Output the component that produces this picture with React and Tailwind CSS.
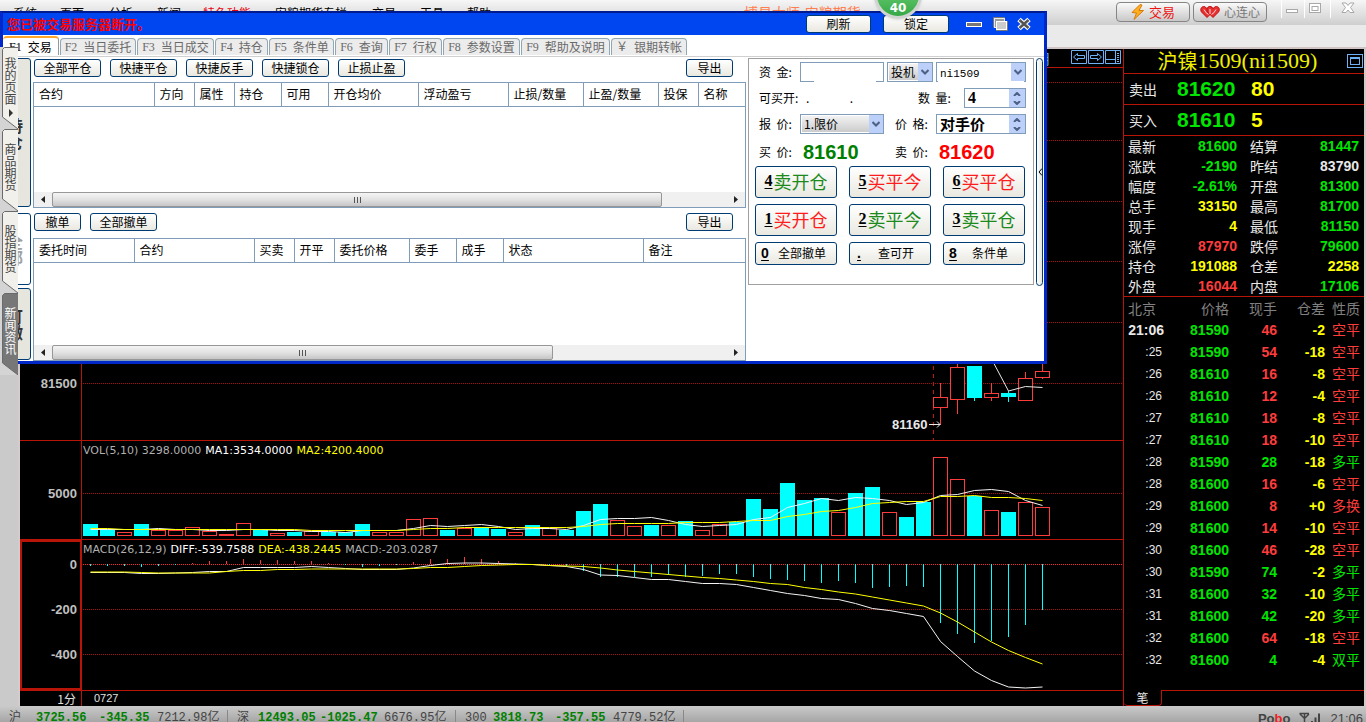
import React from "react";
import { FaBolt, FaHeart } from "react-icons/fa";

const RED = "#ff3c3c";
const CYAN = "#00ffff";

const menuItems = [
  { label: "系统", cls: "w-[47px]" },
  { label: "页面", cls: "w-[49px]" },
  { label: "分析", cls: "w-12" },
  { label: "新闻", cls: "w-[46px]" },
  { label: "特色功能", cls: "w-[72px] text-red-600" },
  { label: "安粮期货专栏", cls: "w-[97px]" },
  { label: "交易", cls: "w-12" },
  { label: "工具", cls: "w-[47px]" },
  { label: "帮助", cls: "w-12" },
];

const windowTabs = [
  { k: "F2", label: "当日委托", cls: "w-[76px]" },
  { k: "F3", label: "当日成交", cls: "w-[77px]" },
  { k: "F4", label: "持仓", cls: "w-[53px]" },
  { k: "F5", label: "条件单", cls: "w-[65px]" },
  { k: "F6", label: "查询", cls: "w-[53px]" },
  { k: "F7", label: "行权", cls: "w-[53px]" },
  { k: "F8", label: "参数设置", cls: "w-[77px]" },
  { k: "F9", label: "帮助及说明", cls: "w-[89px]" },
  { k: "￥", label: "银期转帐", cls: "w-[76px]" },
];

const positionCols = [
  ["合约", "w-[120px]"],
  ["方向", "w-[40px]"],
  ["属性", "w-[40px]"],
  ["持仓", "w-[47px]"],
  ["可用", "w-[47px]"],
  ["开仓均价", "w-[90px]"],
  ["浮动盈亏", "w-[90px]"],
  ["止损/数量", "w-[75px]"],
  ["止盈/数量", "w-[75px]"],
  ["投保", "w-[40px]"],
  ["名称", ""],
];

const orderCols = [
  ["委托时间", "w-[100px]"],
  ["合约", "w-[120px]"],
  ["买卖", "w-[40px]"],
  ["开平", "w-[40px]"],
  ["委托价格", "w-[75px]"],
  ["委手", "w-[47px]"],
  ["成手", "w-[47px]"],
  ["状态", "w-[140px]"],
  ["备注", ""],
];

const G = "text-[#00e600]";
const R = "text-[#ff3c3c]";
const Y = "text-[#ffff00]";
const W = "text-[#e8e8e8]";

const quotes = [
  ["最新", "81600", G, "结算", "81447", G],
  ["涨跌", "-2190", G, "昨结", "83790", W],
  ["幅度", "-2.61%", G, "开盘", "81300", G],
  ["总手", "33150", Y, "最高", "81700", G],
  ["现手", "4", Y, "最低", "81150", G],
  ["涨停", "87970", R, "跌停", "79600", G],
  ["持仓", "191088", Y, "仓差", "2258", Y],
  ["外盘", "16044", R, "内盘", "17106", G],
];

const ticks = [
  ["21:06", "81590", "46", "-2", "空平", R],
  [":25", "81590", "54", "-18", "空平", R],
  [":26", "81610", "16", "-8", "空平", R],
  [":26", "81610", "12", "-4", "空平", R],
  [":27", "81610", "18", "-8", "空平", R],
  [":27", "81610", "18", "-10", "空平", R],
  [":28", "81590", "28", "-18", "多平", G],
  [":28", "81600", "16", "-6", "空平", R],
  [":29", "81600", "8", "+0", "多换", R],
  [":29", "81600", "14", "-10", "空平", R],
  [":30", "81600", "46", "-28", "空平", R],
  [":30", "81590", "74", "-2", "多平", G],
  [":31", "81600", "32", "-10", "多平", G],
  [":31", "81600", "42", "-20", "多平", G],
  [":32", "81600", "64", "-18", "空平", R],
  [":32", "81600", "4", "-4", "双平", G],
];

/* Volume bars: "c" falling (solid), "r" rising (outline), with the bar height. */
const volume = [
  "c12", "c7", "r4", "c12", "r6", "r6", "r9", "r5", "r2", "r13", "c6", "r3", "c4", "r5", "c4", "c4", "c12", "r4", "r4",
  "r17", "r18", "c6", "r8", "c9", "c7", "r4", "c11", "r8", "c6", "c25", "c32", "r16", "r10", "c11", "r11", "c15", "r6",
  "r12", "c14", "c37", "c27", "c53", "c36", "c38", "r24", "c43", "c49", "r24", "c19", "c34", "r79", "r57", "c40", "r26",
  "c24", "r34", "r29",
];
const ma1 = [
  88, 88, 88, 88, 87, 88, 88, 89, 89, 88, 88, 89, 89, 90, 90, 91, 89, 89, 89, 87, 84, 85, 84, 83, 85, 88, 87, 87, 88, 84,
  78, 77, 77, 76, 79, 83, 85, 84, 83, 78, 76, 66, 62, 57, 59, 56, 57, 59, 63, 61, 54, 53, 49, 48, 50, 59, 64,
];
const ma2 = [
  87, 87, 88, 88, 88, 88, 88, 88, 88, 88, 88, 88, 88, 89, 89, 89, 89, 89, 89, 88, 87, 87, 86, 86, 86, 86, 86, 86, 86, 85,
  83, 82, 82, 82, 82, 81, 81, 81, 80, 79, 79, 75, 73, 70, 69, 66, 62, 61, 60, 60, 55, 55, 54, 56, 56, 57, 59,
];
/* Histogram bar ends, measured from the zero line (positive is down). */
const hist = [
  2, 2, 2, 3, 2, 1, -1, -3, -3, -5, -4, -4, -3, -3, -1, 1, 3, 2, 1, -2, -5, -5, -7, -5, -3, -1, 1, 1, 2, 7, 13, 13, 13,
  13, 11, 13, 12, 10, 10, 13, 15, 16, 17, 19, 17, 19, 24, 23, 22, 23, 59, 70, 79, 77, 73, 61, 46,
];
const diff = [
  32, 32, 32, 33, 33, 32.5, 32, 31, 31, 27, 27, 27, 27, 26, 27, 28, 29, 29, 29, 27.5, 25, 23, 22.5, 22.5, 23, 23.5, 24,
  25, 26, 29, 34.5, 35, 37, 39, 39, 41, 43, 43, 44, 47, 50, 53, 55, 58, 59, 63, 68, 70, 73, 76, 101, 116, 130.5, 140,
  146.5, 147.5, 146.5,
];
const dea = [
  31.5, 31.5, 31.5, 32, 32.5, 32.5, 32.5, 32.5, 31, 30, 30, 29, 29, 28.5, 28.5, 28.5, 28.5, 28.5, 28.5, 28, 27, 27, 26,
  25, 24.5, 24, 24, 25, 25.5, 26, 27.5, 29.5, 31, 32.5, 34, 35.5, 37, 38, 39.5, 41, 43, 44, 47, 49, 51.5, 53.5, 56.5,
  59.5, 62.5, 65.5, 72.5, 81.5, 91.5, 101.5, 110, 117, 123.5,
];

/* Candles of the last session: [index, type, high, open/close top, bottom, low]. */
const candles = [
  [50, "r", 315, 329, 340, 357],
  [51, "r", 290, 299, 332, 346],
  [52, "c", 298, 298, 330, 333],
  [53, "r", 315, 325, 330, 333],
  [54, "c", 323, 325, 329, 334],
  [55, "r", 304, 310, 333, 333],
  [56, "r", 290, 303, 310, 311],
];

const line = (values) => values.map((v, i) => `${8.5 + 17 * i},${v + 0.5}`).join(" ");

function GridLine({ y, bright }) {
  return (
    <line x1="1" x2="100%" y1={y} y2={y} stroke={bright ? "#ff2828" : "#a81010"} strokeDasharray="1 1" shapeRendering="crispEdges" />
  );
}

function PriceSvg() {
  return (
    <svg className="block h-[372px] w-full" aria-hidden="true">
      {[14.5, 72.5, 133.5, 193.5, 254.5, 315.5].map((y) => (
        <GridLine key={y} y={y} />
      ))}
      <line x1="851.5" x2="851.5" y1="290" y2="372" stroke="#c01818" strokeDasharray="4 4" />
      {candles.map(([i, t, hi, top, bot, lo]) => {
        const c = t === "c" ? CYAN : RED;
        const x = 1 + 17 * i;
        return (
          <g key={i} stroke={c} shapeRendering="crispEdges">
            <line x1={x + 7.5} x2={x + 7.5} y1={hi} y2={top} />
            <line x1={x + 7.5} x2={x + 7.5} y1={bot} y2={lo} />
            <rect x={x + 0.5} y={top + 0.5} width="14" height={Math.max(bot - top - 1, 1)} fill={t === "c" ? CYAN : "#000"} />
          </g>
        );
      })}
      <polyline points="909,290 926.5,323 943.5,318.5 960.5,319.5" fill="none" stroke="#e8e8e8" />
      <path d="M847 356.5h11m-3-3l3 3l-3 3" fill="none" stroke="#e8e8e8" />
    </svg>
  );
}

function VolumeSvg() {
  return (
    <svg className="block h-[98px] w-full" aria-hidden="true">
      <GridLine y={52.5} />
      {volume.map((v, i) => {
        const h = Number(v.slice(1));
        const x = 1 + 17 * i;
        return v[0] === "c" ? (
          <rect key={i} x={x} y={95 - h} width="15" height={h} fill={CYAN} />
        ) : (
          <rect key={i} x={x + 0.5} y={95.5 - h} width="14" height={h - 1} fill="#000" stroke={RED} />
        );
      })}
      <polyline points={line(ma1)} fill="none" stroke="#f4f4f4" />
      <polyline points={line(ma2)} fill="none" stroke="#ffff00" />
    </svg>
  );
}

function MacdSvg() {
  return (
    <svg className="block h-[150px] w-full" aria-hidden="true">
      <GridLine y={24.5} bright />
      <GridLine y={69.5} />
      <GridLine y={114.5} />
      {hist.map((h, i) => (
        <line key={i} x1={8.5 + 17 * i} x2={8.5 + 17 * i} y1="24" y2={24 + h} stroke={h > 0 ? CYAN : RED} shapeRendering="crispEdges" />
      ))}
      <polyline points={line(diff)} fill="none" stroke="#f4f4f4" />
      <polyline points={line(dea)} fill="none" stroke="#ffff00" />
    </svg>
  );
}

function PushButton({ className = "", children, ...rest }) {
  return (
    <button
      type="button"
      className={`flex shrink-0 items-center justify-center rounded-[3px] border border-[#003c74] bg-gradient-to-b from-white to-[#e9e8e0] whitespace-nowrap ${className}`}
      {...rest}
    >
      {children}
    </button>
  );
}

function ListTable({ cols, label, thumb, className }) {
  return (
    <div className={`flex flex-col border border-[#7f9db9] bg-white ${className}`}>
      <table className="w-full table-fixed border-collapse" aria-label={label}>
        <thead>
          <tr className="h-[23px]">
            {cols.map(([name, w], i) => (
              <th
                key={name}
                className={`border-b border-[#7f9db9] p-0 pl-[5px] text-left font-normal whitespace-nowrap ${w} ${i < cols.length - 1 ? "border-r" : ""}`}
              >
                {name}
              </th>
            ))}
          </tr>
        </thead>
        <tbody />
      </table>
      <div className="mt-auto flex h-[15px] items-center bg-[#f0f0f0]">
        <button type="button" aria-label="向左滚动" className="flex w-[18px] justify-center">
          <svg className="h-2 w-2" viewBox="0 0 8 8"><path d="M6 0v7L2 3.5z" fill="#222" /></svg>
        </button>
        <div className={`flex h-[15px] items-center justify-center gap-0.5 rounded-xs border border-[#979797] bg-gradient-to-b from-[#f4f4f4] via-[#e2e2e2] to-[#c6c6c8] ${thumb}`}>
          <i className="h-1.5 w-px bg-[#555]" />
          <i className="h-1.5 w-px bg-[#555]" />
          <i className="h-1.5 w-px bg-[#555]" />
        </div>
        <button type="button" aria-label="向右滚动" className="ml-auto flex w-[18px] justify-center">
          <svg className="h-2 w-2" viewBox="0 0 8 8"><path d="M2 0v7L6 3.5z" fill="#222" /></svg>
        </button>
      </div>
    </div>
  );
}

function Dropdown({ label, value, className, selectClass = "text-xs", shaded }) {
  return (
    <div className={`relative h-5 shrink-0 border border-[#7f9db9] bg-white p-px ${className}`}>
      <select
        aria-label={label}
        defaultValue={value}
        className={`h-full w-full appearance-none pl-0.5 leading-4 outline-none ${selectClass} ${shaded ? "bg-gradient-to-b from-[#f2f2f2] to-[#cccccc]" : "bg-white"}`}
      >
        <option>{value}</option>
      </select>
      <span className="pointer-events-none absolute inset-y-0 right-0 flex w-[14px] items-center justify-center bg-[#bcd0fa]">
        <svg className="h-2 w-2" viewBox="0 0 8 8"><path d="M0.5 2L4 5.5L7.5 2" fill="none" stroke="#4d6185" strokeWidth="2" /></svg>
      </span>
    </div>
  );
}

function Spinner({ id, value, className, inputClass }) {
  return (
    <div className={`flex h-5 shrink-0 border border-[#7f9db9] bg-white ${className}`}>
      <input id={id} defaultValue={value} className={`h-full min-w-0 flex-1 pl-[3px] font-bold outline-none ${inputClass}`} />
      <div className="flex w-4 flex-col bg-[#bcd0fa]">
        <button type="button" aria-label="增加" className="flex flex-1 items-center justify-center">
          <svg className="h-1 w-2" viewBox="0 0 8 4"><path d="M1 4L4 1L7 4" fill="none" stroke="#4d6185" strokeWidth="2" /></svg>
        </button>
        <button type="button" aria-label="减少" className="flex flex-1 items-center justify-center">
          <svg className="h-1 w-2" viewBox="0 0 8 4"><path d="M1 0L4 3L7 0" fill="none" stroke="#4d6185" strokeWidth="2" /></svg>
        </button>
      </div>
    </div>
  );
}

function KeyButton({ k, text, color }) {
  return (
    <PushButton className="h-8 w-[82px] gap-px pb-[3px]">
      <b className="text-base leading-5 underline underline-offset-2 font-['Liberation_Serif',serif]">{k}</b>
      <span className={`text-lg leading-6 ${color}`}>{text}</span>
    </PushButton>
  );
}

function SmallKeyButton({ k, text }) {
  return (
    <PushButton className="h-[23px] w-[82px] px-[5px] pb-0.5">
      <b className="w-2 text-sm leading-4 underline underline-offset-2 font-['Liberation_Sans',sans-serif]">{k}</b>
      <span className="flex-1 pl-1">{text}</span>
    </PushButton>
  );
}

function TradePanel() {
  const green = "text-[#1c8a1c]";
  const red = "text-[#ff1c1c]";
  return (
    <section className="ml-0.5 h-[227px] w-[286px] shrink-0 border border-[#a0a0a0] pt-[3px]" aria-label="下单">
      <div className="flex flex-col gap-1.5 pl-2.5">
        <div className="flex h-5 items-center gap-[3px]">
          <label htmlFor="fund" className="w-[38px] shrink-0">资&nbsp;&nbsp;金:</label>
          <div className="relative h-5 w-[84px] shrink-0">
            <input id="fund" className="h-5 w-full border border-[#7f9db9] bg-white outline-none" />
            <span className="absolute right-2 -bottom-px h-0.5 w-[62px] bg-white" />
          </div>
          <Dropdown label="投机套保" value="投机" className="w-[46px]" shaded />
          <Dropdown label="合约代码" value="ni1509" className="w-[90px]" selectClass="text-[11px] font-['Liberation_Mono',monospace]" />
        </div>
        <div className="flex h-5 items-center">
          <span className="w-[41px] shrink-0 whitespace-nowrap">可买开:</span>
          <span className="w-[118px] shrink-0 pl-1.5 whitespace-pre">.               .</span>
          <label htmlFor="qty" className="w-[46px] shrink-0">数&nbsp;&nbsp;量:</label>
          <Spinner id="qty" value="4" className="w-[62px]" inputClass="text-base font-['Liberation_Serif',serif]" />
        </div>
        <div className="flex h-5 items-center">
          <span className="w-[41px] shrink-0">报&nbsp;&nbsp;价:</span>
          <Dropdown label="报价" value="1.限价" className="w-[84px]" shaded />
          <label htmlFor="px" className="ml-[11px] w-[41px] shrink-0">价&nbsp;&nbsp;格:</label>
          <Spinner id="px" value="对手价" className="w-[90px]" inputClass="pb-0.5 text-[15px] leading-4" />
        </div>
        <div className="flex h-6 items-center">
          <span className="w-11 shrink-0">买&nbsp;&nbsp;价:</span>
          <b className="w-[92px] text-xl leading-6 text-[#008000] font-['Liberation_Sans',sans-serif]">81610</b>
          <span className="w-11 shrink-0">卖&nbsp;&nbsp;价:</span>
          <b className="text-xl leading-6 text-[#ff0000] font-['Liberation_Sans',sans-serif]">81620</b>
        </div>
      </div>
      <div className="mt-0.5 grid grid-cols-[82px_82px_82px] gap-x-3 gap-y-1.5 pl-1.5">
        <KeyButton k="4" text="卖开仓" color={green} />
        <KeyButton k="5" text="买平今" color={red} />
        <KeyButton k="6" text="买平仓" color={red} />
        <KeyButton k="1" text="买开仓" color={red} />
        <KeyButton k="2" text="卖平今" color={green} />
        <KeyButton k="3" text="卖平仓" color={green} />
        <SmallKeyButton k="0" text="全部撤单" />
        <SmallKeyButton k="." text="查可开" />
        <SmallKeyButton k="8" text="条件单" />
      </div>
    </section>
  );
}

function TradeWindow() {
  return (
    <div
      role="dialog"
      aria-label="交易"
      className="absolute top-[11px] left-0 flex h-[353px] w-[1047px] flex-col border-t-2 border-r-[3px] border-b-[3px] border-l-[3px] border-t-[#001a90] border-r-[#0028c8] border-b-[#0028c8] border-l-[#0028c8] bg-white"
    >
      <div className="flex h-[22px] shrink-0 items-center bg-[#0046f0] pr-3 pl-1">
        <span className="text-[13px] leading-4 font-bold text-[#ff0000]">您已被交易服务器断开。</span>
        <PushButton className="ml-auto h-[18px] w-[65px]">刷新</PushButton>
        <PushButton className="ml-3 h-[18px] w-[66px]">锁定</PushButton>
        <button type="button" aria-label="最小化" className="ml-[17px]">
          <svg className="h-4 w-4" viewBox="0 0 16 16"><rect x="0.5" y="6.500" width="15" height="4" fill="#777" stroke="#fff" /></svg>
        </button>
        <button type="button" aria-label="还原" className="ml-2.5">
          <svg className="h-4 w-4" viewBox="0 0 16 16">
            <path d="M1.500 11.500v-10h11v3" fill="none" stroke="#777" />
            <rect x="2.500" y="2.500" width="10" height="9" fill="#999" stroke="#e8e8e8" />
            <rect x="4.500" y="5.500" width="10" height="8" fill="#ccc" stroke="#fff" />
            <path d="M15.500 5v9.500H4" fill="none" stroke="#777" />
          </svg>
        </button>
        <button type="button" aria-label="关闭" className="ml-2">
          <svg className="h-4 w-4" viewBox="0 0 16 16">
            <path d="M3 3.500L13 12.500M13 3.500L3 12.500" stroke="#fff" strokeWidth="5" />
            <path d="M3.5 4L12.5 12M12.5 4L3.5 12" stroke="#555" strokeWidth="2.6" />
          </svg>
        </button>
      </div>

      <div role="tablist" className="flex h-[22px] shrink-0 items-end gap-px border-b border-[#d0d0d0] pb-px">
        <button type="button" role="tab" aria-selected="true" className="flex h-[19px] w-14 items-center gap-1.5 rounded-t border-t-2 border-r border-t-[#ffa52c] border-r-[#919b9c] pl-1.5 leading-4">
          <span className="font-['Liberation_Serif',serif]">F1</span>交易
        </button>
        {windowTabs.map((t) => (
          <button
            key={t.k}
            type="button"
            role="tab"
            aria-selected="false"
            className={`flex h-[17px] items-center justify-center gap-1.5 rounded-t-sm border border-b-0 border-[#91a7b4] bg-[#ececec] leading-4 whitespace-nowrap text-[#6a6a6a] ${t.cls}`}
          >
            <span className="font-['Liberation_Serif','Noto_Sans_CJK_SC',serif]">{t.k}</span>{t.label}
          </button>
        ))}
      </div>

      <div className="flex min-h-0 flex-1 pt-px">
        <div className="mr-0.5 flex w-7 shrink-0 flex-col text-base leading-4 font-bold">
          <button type="button" className="h-[149px] rounded-r-[3px] border border-[#003c74] bg-[#e6e5de] pr-1 text-[#333]">持<br />仓</button>
          <button type="button" className="mt-1.5 h-[72px] rounded-r-[3px] border border-[#003c74] bg-white pr-1 text-[#a0a0a0]">全<br />部</button>
          <button type="button" className="mt-[3px] h-[72px] rounded-r-[3px] border border-[#003c74] bg-[#e6e5de] pr-1 text-[#333]">可<br />撤</button>
        </div>
        <div className="flex w-[713px] shrink-0 flex-col">
          <div className="flex h-6 shrink-0 gap-[9px] pt-px pr-[13px] pl-px">
            {["全部平仓", "快捷平仓", "快捷反手", "快捷锁仓", "止损止盈"].map((t) => (
              <PushButton key={t} className="h-[18px] w-[67px]">{t}</PushButton>
            ))}
            <PushButton className="ml-auto h-[18px] w-[47px]">导出</PushButton>
          </div>
          <ListTable cols={positionCols} label="持仓" thumb="w-[610px]" className="h-[126px] shrink-0" />
          <div className="flex h-[30px] shrink-0 gap-[9px] pt-[5px] pr-[13px] pl-px">
            <PushButton className="h-[18px] w-[47px]">撤单</PushButton>
            <PushButton className="h-[18px] w-[67px]">全部撤单</PushButton>
            <PushButton className="ml-auto h-[18px] w-[47px]">导出</PushButton>
          </div>
          <ListTable cols={orderCols} label="委托" thumb="w-[501px]" className="min-h-0 flex-1" />
        </div>
        <TradePanel />
        <button type="button" aria-label="收起" className="ml-0.5 flex h-[228px] w-[7px] items-center justify-center rounded border border-[#003c74] bg-gradient-to-r from-white to-[#e6e5de]">
          <svg className="h-2 w-1" viewBox="0 0 4 8"><path d="M4 0.5L1 4L4 7.5" fill="none" stroke="#000" /></svg>
        </button>
      </div>
    </div>
  );
}

function SideTabs() {
  const tabs = ["我的页面", "商品期货", "股指期货", "新闻资讯"];
  return (
    <nav className="absolute top-[47px] left-0 w-[18px] bg-[#d4d4d4]" aria-label="页面">
      {tabs.map((t, i) => {
        const active = i === 3;
        return (
          <button key={t} type="button" className={`relative flex h-[82px] w-[18px] flex-col items-center pl-[3px] text-xs leading-3 ${i === 0 ? "pt-2.5" : "pt-3.5"} ${active ? "text-white" : "text-[#444]"}`}>
            <svg className="absolute inset-0 h-full w-full" viewBox="0 0 18 82">
              <path d="M18 0.5H4.5L2.5 2.5V70L18 82" fill={active ? "#777" : "#f1f0ea"} stroke="#6a6a6a" />
            </svg>
            {t.split("").map((c) => (
              <span key={c} className="relative block h-3">{c}</span>
            ))}
            {i === 0 && (
              <svg className="relative mt-1 h-2 w-1.5" viewBox="0 0 6 8"><path d="M1 0L5 4L1 8z" fill="#333" /></svg>
            )}
          </button>
        );
      })}
    </nav>
  );
}

function TopBar() {
  return (
    <header className="flex h-[25px] shrink-0 items-start bg-gradient-to-b from-[#f6f6f6] to-[#cfcfcf]">
      <nav className="flex shrink-0 pt-[5px] pl-[13px] leading-4">
        {menuItems.map((m) => (
          <a key={m.label} href="#" className={`whitespace-nowrap ${m.cls}`}>{m.label}</a>
        ))}
      </nav>
      <span className="ml-[229px] shrink-0 pt-0.5 text-sm leading-5 whitespace-nowrap text-[#ff7f50]">博易大师-安粮期货</span>
      <div className="ml-auto flex items-start">
        <button type="button" className="mt-0.5 flex h-5 w-[74px] items-center justify-center gap-1 rounded border border-[#858585] bg-gradient-to-b from-[#fafafa] to-[#c8c8c8] text-[13px] text-[#ee1111]">
          <svg className="h-4 w-3.5" viewBox="0 0 14 16"><path d="M9 0.500L1 8.500L5.500 9L3 15.500L12.500 6.500L8 6.500L11 1z" fill="#ffb020" stroke="#d87808" /></svg>交易
        </button>
        <button type="button" className="mt-0.5 ml-[3px] flex h-5 w-[74px] items-center justify-center gap-1 rounded border border-[#858585] bg-gradient-to-b from-[#fafafa] to-[#c8c8c8] text-[12px] whitespace-nowrap text-[#777]">
          <svg className="h-3.5 w-5" viewBox="0 0 20 14">
            <path d="M7 12.500L1.500 7C-0.500 4 2 1 4.500 1.500L7 3.500L9.500 1.500C12 1 14 4 12.500 7z" fill="#e83030" stroke="#c01010" />
            <path d="M13 12.500L7.500 7C6 4 8 1 10.500 1.500L13 3.500L15.500 1.500C18.500 1 20.500 4 18.500 7z" fill="#e83030" stroke="#c01010" />
            <path d="M4 4.500q2 4 4.500 5M16 4.500q-2 4-4.500 5M10 4v5" fill="none" stroke="#ffd8d8" />
          </svg>
          心连心
        </button>
        <div className="ml-3.5 flex h-[18px] text-[#a8a8a8]">
          <button type="button" aria-label="最小化主窗口" className="w-6 border-x border-white pl-1">
            <svg className="h-3.5 w-3.5" viewBox="0 0 14 14"><rect x="0.500" y="7.500" width="11" height="3" fill="#fff" stroke="currentColor" /></svg>
          </button>
          <button type="button" aria-label="还原主窗口" className="w-[26px] border-r border-white pl-1">
            <svg className="h-3.5 w-3.5" viewBox="0 0 14 14"><rect x="0.5" y="1.500" width="11" height="9" fill="#fff" stroke="currentColor" /><rect x="3" y="4.5" width="6" height="4" fill="none" stroke="currentColor" /></svg>
          </button>
          <button type="button" aria-label="关闭主窗口" className="w-[35px] pl-2.5">
            <svg className="h-3.5 w-3.5" viewBox="0 0 14 14"><path d="M1 1h4l2 2.5L9 1h4L9.500 5.500L13 10.500H9L7 8L5 10.500H1L4.500 5.500z" fill="#fff" stroke="currentColor" /></svg>
          </button>
        </div>
      </div>
    </header>
  );
}

function QuotePanel() {
  return (
    <aside className="flex w-[241px] shrink-0 flex-col border-l border-[#b81408] bg-black text-sm leading-5 text-[#e8e8e8]">
      <div className="flex h-[25px] shrink-0 items-center border-b border-[#b81408]">
        <h1 className="flex flex-1 items-center justify-center pl-1 text-[20px] leading-6 whitespace-nowrap text-[#f0f000]">
          沪镍<span className="text-[22px] font-['Liberation_Serif',serif]">1509(ni1509)</span>
        </h1>
        <button type="button" aria-label="窗口" className="mr-px flex h-3.5 w-4 items-center justify-center border border-[#6fb1f5]">
          <i className="h-2 w-2.5 border border-t-2 border-[#6fb1f5]" />
        </button>
      </div>
      {[["卖出", "81620", "80"], ["买入", "81610", "5"]].map(([n, p, q]) => (
        <div key={n} className="flex h-[31px] shrink-0 items-center border-b border-[#b81408] pl-[5px]">
          <span className="w-12">{n}</span>
          <b className="w-[74px] text-[21px] text-[#00e600] font-['Liberation_Sans',sans-serif]">{p}</b>
          <b className="text-[21px] text-[#ffff00] font-['Liberation_Sans',sans-serif]">{q}</b>
        </div>
      ))}
      <div className="shrink-0 border-b border-[#b81408]">
        <table className="w-full table-fixed border-collapse" aria-label="行情">
          <tbody>
            {quotes.map((q) => (
              <tr key={q[0]} className="h-5">
                <th className="w-9 p-0 pl-1 text-left font-normal">{q[0]}</th>
                <td className={`w-[77px] p-0 text-right font-bold font-['Liberation_Sans',sans-serif] ${q[2]}`}>{q[1]}</td>
                <th className="w-[50px] p-0 pl-[13px] text-left font-normal">{q[3]}</th>
                <td className={`p-0 pr-[5px] text-right font-bold font-['Liberation_Sans',sans-serif] ${q[5]}`}>{q[4]}</td>
              </tr>
            ))}
          </tbody>
        </table>
      </div>
      <table className="w-full table-fixed border-collapse" aria-label="成交明细">
        <thead>
          <tr className="h-[22px] text-[#808080]">
            <th className="w-10 p-0 pl-1 text-left font-normal">北京</th>
            <th className="w-[65px] p-0 text-right font-normal">价格</th>
            <th className="w-12 p-0 text-right font-normal">现手</th>
            <th className="w-12 p-0 text-right font-normal">仓差</th>
            <th className="p-0 pr-1 text-right font-normal">性质</th>
          </tr>
        </thead>
        <tbody className="text-right font-bold font-['Liberation_Sans','Noto_Sans_CJK_SC',sans-serif]">
          {ticks.map((t, i) => (
            <tr key={i} className="h-[22px]">
              <td className={`p-0 ${i ? "pr-0.5 text-xs font-normal" : ""}`}>{t[0]}</td>
              <td className="p-0 text-[#00e600]">{t[1]}</td>
              <td className={`p-0 ${t[5]}`}>{t[2]}</td>
              <td className="p-0 text-[#ffff00]">{t[3]}</td>
              <td className={`p-0 pr-1 font-normal ${t[5]}`}>{t[4]}</td>
            </tr>
          ))}
        </tbody>
      </table>
      <div className="mt-auto flex h-4 shrink-0">
        <button type="button" className="w-[38px] rounded-b border-r border-b border-[#b81408] text-xs leading-3">笔</button>
        <div className="flex-1 border-t border-[#b81408]" />
      </div>
    </aside>
  );
}

function Axis({ children, className = "border-r pr-1" }) {
  return (
    <div className={`w-[62px] shrink-0 border-[#b81408] text-right text-[13px] leading-4 font-bold text-[#c0c0c0] font-['Liberation_Sans',sans-serif] ${className}`}>
      {children}
    </div>
  );
}

function ChartArea() {
  return (
    <section className="flex min-w-0 flex-1 flex-col bg-black" aria-label="K线图">
      <div className="flex h-[19px] shrink-0 items-start justify-end gap-px border-b border-[#b81408] pt-px pr-0.5 text-[#6fb1f5]">
        <span className="mr-5 text-sm leading-4">用</span>
        <svg className="h-3.5 w-4" viewBox="0 0 16 14" fill="none" stroke="currentColor"><path d="M0.500 0.500h15v13h-15zM2.500 7L6.500 3.500v2h7v3h-7v2z" /></svg>
        <svg className="h-3.5 w-4" viewBox="0 0 16 14" fill="none" stroke="currentColor"><path d="M0.500 0.500h15v13h-15zM13.500 7L9.500 3.500v2h-7v3h7v2z" /></svg>
        <svg className="h-3.5 w-4" viewBox="0 0 16 14" fill="none" stroke="currentColor"><path d="M0.500 0.500h15v13h-15zM10.500 1v12M1 9.500h9M12 3.500h2M12 5.500h2M12 7.500h2M12 9.500h2M12 11.500h2" /></svg>
      </div>
      <div className="flex min-h-0 flex-1 items-end overflow-hidden border-b border-[#b81408]">
        <Axis className="flex h-full flex-col justify-end border-r pr-1 pb-12">81500</Axis>
        <div className="relative min-w-0 flex-1">
          <PriceSvg />
          <span className="absolute bottom-[7px] left-[810px] text-[13px] leading-4 font-bold text-[#e8e8e8] font-['Liberation_Sans',sans-serif]">81160</span>
        </div>
      </div>
      <div className="flex shrink-0 border-b border-[#b81408]">
        <Axis className="border-r pt-[45px] pr-1">5000</Axis>
        <div className="relative min-w-0 flex-1">
          <VolumeSvg />
          <p className="absolute top-0.5 left-px flex gap-1 text-[11px] leading-4 whitespace-nowrap text-[#b0b0b0] font-['DejaVu_Sans',sans-serif]">
            <span>VOL(5,10) 3298.0000</span>
            <span className="text-white">MA1:3534.0000</span>
            <span className="text-[#ffff00]">MA2:4200.4000</span>
          </p>
        </div>
      </div>
      <div className="flex shrink-0 border-b border-[#b81408]">
        <Axis className="flex flex-col gap-[29px] border-2 pt-[15px] pr-[3px]">
          <span>0</span>
          <span>-200</span>
          <span>-400</span>
        </Axis>
        <div className="relative min-w-0 flex-1">
          <MacdSvg />
          <p className="absolute top-0.5 left-px flex gap-1 text-[11px] leading-4 whitespace-nowrap text-[#b0b0b0] font-['DejaVu_Sans',sans-serif]">
            <span>MACD(26,12,9)</span>
            <span className="text-white">DIFF:-539.7588</span>
            <span className="text-[#ffff00]">DEA:-438.2445</span>
            <span>MACD:-203.0287</span>
          </p>
        </div>
      </div>
      <div className="flex h-[15px] shrink-0 text-xs leading-[15px] text-[#e0e0e0]">
        <span className="w-[62px] border-r border-[#b81408] pr-[5px] text-right">1分</span>
        <span className="pl-3 text-[11px] font-['Liberation_Sans',sans-serif]">0727</span>
      </div>
    </section>
  );
}

function StatusBar() {
  const items = [
    ["沪", "w-[27px]", "3725.56", "w-[63px]", "-345.35", "w-[58px]", "7212.98亿", "w-[70px]"],
    ["深", "w-[21px]", "12493.05", "w-[62px]", "-1025.47", "w-[64px]", "6676.95亿", "w-[71px]"],
    ["300", "w-[28px]", "3818.73", "w-[62px]", "-357.55", "w-[58px]", "4779.52亿", "w-[70px]"],
  ];
  return (
    <footer className="flex h-4 shrink-0 items-start overflow-hidden bg-gradient-to-b from-[#cacaca] to-[#a6a6a6] pr-[3px] pl-[9px] text-[#444]">
      <div className="flex pt-1 text-xs leading-4 font-['Liberation_Mono','Noto_Sans_CJK_SC',monospace]">
        {items.map((it) => (
          <div key={it[0]} className="flex whitespace-nowrap">
            <span className={`shrink-0 ${it[1]}`}>{it[0]}</span>
            <b className={`shrink-0 text-[#008000] ${it[3]}`}>{it[2]}</b>
            <b className={`shrink-0 text-[#008000] ${it[5]}`}>{it[4]}</b>
            <span className={`shrink-0 ${it[7]}`}>{it[6]}</span>
            <i className="mr-[9px] h-4 w-px bg-[#888]" />
          </div>
        ))}
      </div>
      <div className="ml-auto flex items-start gap-[9px] pt-1">
        <b className="text-[13px] leading-[18px] font-['Liberation_Sans',sans-serif]">Po<span className="text-[#f02020]">b</span>o</b>
        <svg className="mt-0.5 h-3.5 w-[22px]" viewBox="0 0 22 14">
          <path d="M0.500 1.500H10M1 2l4.500 4.500L10 2M5.500 1v13" fill="none" stroke="#444" strokeWidth="1.500" />
          <path d="M12 9h2v5h-2zM15.500 5.500h2V14h-2zM19 1.500h2V14h-2z" fill="#444" />
        </svg>
        <span className="text-[13px] leading-[18px] font-['Liberation_Sans',sans-serif]">21:06</span>
      </div>
    </footer>
  );
}

export default function App() {
  return (
    <div className="relative flex h-screen w-full flex-col overflow-hidden bg-[#c8c8c8] text-xs text-black font-['Noto_Sans_CJK_SC',sans-serif]">
      <TopBar />
      <div className="h-6 shrink-0 border-b-2 border-[#d0c4c4] bg-[#eaeaea]" />
      <main className="flex min-h-0 flex-1">
        <div className="w-5 shrink-0 border-r-2 border-[#d4cccc] bg-[#cacaca]" />
        <ChartArea />
        <QuotePanel />
        <div className="w-0.5 shrink-0 bg-[#d4c8c8]" />
      </main>
      <StatusBar />
      <TradeWindow />
      <SideTabs />
      <div className="absolute -top-[29px] left-[874px] flex h-12 w-12 items-end justify-center rounded-full border-[3px] border-[#d0d4d0] bg-gradient-to-b from-[#7be08a] to-[#35a845] text-xs leading-4 font-bold text-white shadow font-['DejaVu_Sans',sans-serif]">
        40
      </div>
    </div>
  );
}
